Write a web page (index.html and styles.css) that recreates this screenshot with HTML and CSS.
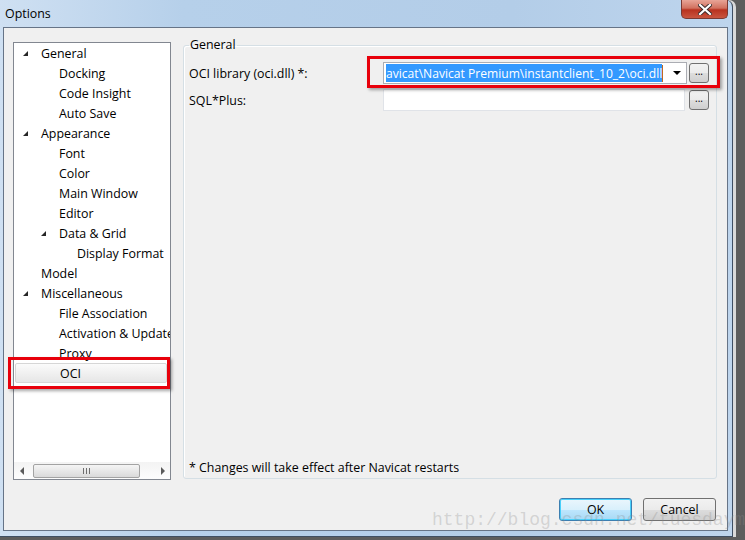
FILE: index.html
```html
<!DOCTYPE html>
<html lang="en">
<head>
  <meta charset="UTF-8" />
  <title>Options</title>
  <link rel="stylesheet" href="styles.css">
</head>
<body>

  <div class="window">
    <div class="titlebar">
      <span class="title">Options</span>
      <button class="close" title="Close">
        <svg width="14" height="11" viewBox="0 0 14 11">
          <path d="M2 1 L12 10 M12 1 L2 10" stroke="#3a2a2a" stroke-width="4" stroke-linecap="square"/>
          <path d="M2 1 L12 10 M12 1 L2 10" stroke="#fff" stroke-width="2.2" stroke-linecap="square"/>
        </svg>
      </button>
    </div>

    <div class="client">
      <div class="main">
        <!-- Tree of option pages -->
        <div class="tree">
          <ul class="tree-items">
            <li class="node lvl0"><span class="twisty"></span>General</li>
            <li class="node lvl1">Docking</li>
            <li class="node lvl1">Code Insight</li>
            <li class="node lvl1">Auto Save</li>
            <li class="node lvl0"><span class="twisty"></span>Appearance</li>
            <li class="node lvl1">Font</li>
            <li class="node lvl1">Color</li>
            <li class="node lvl1">Main Window</li>
            <li class="node lvl1">Editor</li>
            <li class="node lvl1"><span class="twisty"></span>Data &amp; Grid</li>
            <li class="node lvl2">Display Format</li>
            <li class="node lvl0">Model</li>
            <li class="node lvl0"><span class="twisty"></span>Miscellaneous</li>
            <li class="node lvl1">File Association</li>
            <li class="node lvl1">Activation &amp; Update</li>
            <li class="node lvl1">Proxy</li>
            <li class="node lvl1 selected">OCI</li>
          </ul>
          <div class="hscroll">
            <span class="arrow arrow-left"></span>
            <span class="thumb"><span class="grip"></span></span>
            <span class="arrow arrow-right"></span>
          </div>
        </div>

        <!-- OCI settings -->
        <fieldset class="group">
          <legend>General</legend>
          <div class="fields">
            <label>OCI library (oci.dll) *:</label>
            <div class="combo">
              <span class="combo-text"><span class="sel">avicat\Navicat Premium\instantclient_10_2\oci.dll</span><span class="caret"></span></span>
              <span class="drop"></span>
            </div>
            <button class="browse">...</button>

            <label>SQL*Plus:</label>
            <div class="edit"></div>
            <button class="browse">...</button>
          </div>
          <p class="note">* Changes will take effect after Navicat restarts</p>
        </fieldset>
      </div>

      <div class="actions">
        <button class="btn default">OK</button>
        <button class="btn">Cancel</button>
      </div>

      <!-- red annotation boxes -->
      <div class="mark mark-tree"></div>
      <div class="mark mark-lib"></div>
    </div>
  </div>

  <div class="watermark">http://blog.csdn.net/tuesdaym</div>

</body>
</html>
```

FILE: styles.css
```css
body {
  margin: 0;
  width: 745px;
  height: 540px;
  overflow: hidden;
  position: relative;
  background: #5d5d5d;
  font-family: "Open Sans", "Noto Sans", sans-serif;
  font-size: 12.4px;
  color: #000;
}

.window {
  width: 733px;
  height: 537px;
  box-sizing: border-box;
  background: linear-gradient(90deg, #cfe0f2 0%, #b6d0ea 25%, #b3cde8 70%, #bed5ed 100%);
  border-right: 1px solid #3f4f63;
  border-bottom: 1px solid #3f4f63;
  border-radius: 0 7px 0 0;
  display: flex;
  flex-direction: column;
  box-shadow: 3px 0 0 #d9d9d9;
}

.titlebar {
  height: 27px;
  display: flex;
  justify-content: space-between;
  align-items: flex-start;
  flex-shrink: 0;
}

.title {
  margin: 6px 0 0 5px;
  line-height: 16px;
}

.close {
  width: 47px;
  height: 19px;
  margin-right: 4px;
  padding: 0;
  border: 1px solid #7a3a33;
  border-top: none;
  border-radius: 0 0 5px 5px;
  background: linear-gradient(#e8a597 0%, #d1715f 45%, #b8321f 55%, #c9553f 100%);
  display: flex;
  align-items: center;
  justify-content: center;
}

.client {
  position: relative;
  flex: 1;
  margin: 0 4px 5px 3px;
  border: 1px solid #667487;
  background: #f0f0f0;
  display: flex;
  flex-direction: column;
}

.main {
  display: flex;
  align-items: flex-start;
  gap: 12px;
  padding: 14px 10px 0 9px;
}

/* tree */
.tree {
  width: 158px;
  height: 438px;
  box-sizing: border-box;
  border: 1px solid #828790;
  background: #fff;
  display: flex;
  flex-direction: column;
}

.tree-items {
  list-style: none;
  margin: 0;
  padding: 0;
  flex: 1;
  overflow: hidden;
}

.node {
  position: relative;
  height: 20px;
  line-height: 22px;
  white-space: nowrap;
  overflow: hidden;
  box-sizing: border-box;
}

.lvl0 { padding-left: 27px; }
.lvl1 { padding-left: 45px; }
.lvl2 { padding-left: 63px; }

.twisty {
  position: absolute;
  top: 8px;
  width: 0;
  height: 0;
  border-left: 5px solid transparent;
  border-bottom: 5px solid #262626;
}

.lvl0 .twisty { left: 9px; }
.lvl1 .twisty { left: 27px; }

.selected {
  margin: 0 3px 0 1px;
  padding-left: 44px;
  border: 1px solid #d6d6d6;
  border-radius: 2px;
  line-height: 20px;
  background: linear-gradient(#fbfbfb, #e6e6e6);
}

.hscroll {
  height: 17px;
  display: flex;
  align-items: center;
  background: linear-gradient(#f3f3f3, #fdfdfd);
}

.arrow {
  width: 17px;
  height: 17px;
  position: relative;
}

.arrow::after {
  content: "";
  position: absolute;
  top: 5px;
  border-top: 4px solid transparent;
  border-bottom: 4px solid transparent;
}

.arrow-left::after {
  left: 6px;
  border-right: 4px solid #5a5a5a;
}

.arrow-right::after {
  left: 8px;
  border-left: 4px solid #5a5a5a;
}

.thumb {
  width: 107px;
  height: 14px;
  margin-left: 2px;
  box-sizing: border-box;
  border: 1px solid #a3a3a3;
  border-radius: 2px;
  background: linear-gradient(#f5f5f5, #dadada);
  display: flex;
  align-items: center;
  justify-content: center;
}

.grip {
  width: 7px;
  height: 6px;
  background: repeating-linear-gradient(90deg, #6e6e6e 0 1px, transparent 1px 3px);
}

.hscroll .arrow-right {
  margin-left: auto;
}

/* group box */
.group {
  width: 534px;
  height: 441px;
  margin: -4px 0 0 0;
  padding: 0 0 3px 5px;
  box-sizing: border-box;
  border: 1px solid #d5dfe5;
  border-radius: 3px;
  box-shadow: inset 1px 1px 0 #fff;
  display: flex;
  flex-direction: column;
  min-width: 0;
}

.group legend {
  margin-left: 0;
  padding: 0 1px;
  line-height: 14px;
}

.fields {
  display: grid;
  grid-template-columns: 192px 304px 20px;
  grid-auto-rows: 22px;
  column-gap: 2px;
  row-gap: 5px;
  margin-top: 10px;
  align-items: center;
}

.fields label {
  line-height: 20px;
  padding-top: 2px;
}

.combo {
  height: 22px;
  box-sizing: border-box;
  border: 1px solid #abadb3;
  background: #fff;
  display: flex;
  align-items: center;
}

.combo-text {
  flex: 1;
  overflow: hidden;
  white-space: nowrap;
  padding-left: 2px;
  display: flex;
  align-items: center;
}

.sel {
  background: #3399ff;
  color: #fff;
  font-size: 12.1px;
  line-height: 17px;
  padding-top: 1px;
}

.caret {
  width: 1px;
  height: 17px;
  background: #c06a20;
}

.drop {
  width: 18px;
  height: 20px;
  position: relative;
}

.drop::after {
  content: "";
  position: absolute;
  left: 5px;
  top: 8px;
  border-left: 4px solid transparent;
  border-right: 4px solid transparent;
  border-top: 4px solid #000;
}

.edit {
  width: 302px;
  height: 22px;
  box-sizing: border-box;
  border: 1px solid #e0e3e8;
  background: #fff;
}

.browse {
  width: 20px;
  height: 20px;
  padding: 0 0 4px;
  border: 1px solid #707070;
  border-radius: 3px;
  background: linear-gradient(#f2f2f2 0%, #ebebeb 50%, #dddddd 51%, #cfcfcf 100%);
  font: 10px "Open Sans", sans-serif;
  line-height: 10px;
  color: #000;
}

.note {
  margin: auto 0 0 0;
  line-height: 14px;
}

/* dialog buttons */
.actions {
  display: flex;
  justify-content: flex-end;
  gap: 11px;
  padding: 18px 11px 0 0;
}

.btn {
  width: 73px;
  height: 23px;
  border: 1px solid #707070;
  border-radius: 3px;
  background: linear-gradient(#f2f2f2 0%, #ebebeb 50%, #dddddd 51%, #cfcfcf 100%);
  font: 12.4px "Open Sans", sans-serif;
  color: #000;
}

.btn.default {
  border-color: #3c7fb1;
  background: linear-gradient(#eaf6fd 0%, #d9f0fc 50%, #bee6fd 51%, #a7d9f5 100%);
  box-shadow: inset 0 0 0 1px #48d0fb;
}

/* red highlight boxes drawn over the screenshot */
.mark {
  position: absolute;
  box-sizing: border-box;
  border: 3px solid #e8000b;
  box-shadow: 2px 2px 3px rgba(0, 0, 0, 0.35);
}

.mark-tree {
  left: 4px;
  top: 329px;
  width: 162px;
  height: 32px;
}

.mark-lib {
  left: 363px;
  top: 28px;
  width: 353px;
  height: 32px;
}

.watermark {
  position: absolute;
  left: 432px;
  top: 510px;
  font: 18px "Liberation Mono", monospace;
  color: rgba(140, 140, 140, 0.3);
  white-space: nowrap;
  pointer-events: none;
}
```
